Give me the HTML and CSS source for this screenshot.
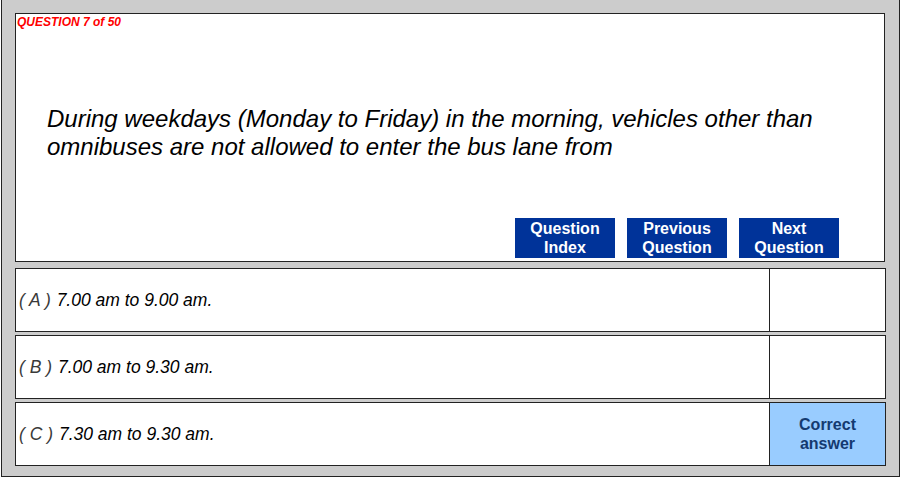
FILE: index.html
```html
<!DOCTYPE html>
<html lang="en">
<head>
<meta charset="utf-8">
<title>Question 7 of 50</title>
<link rel="stylesheet" href="styles.css">
</head>
<body>
<div class="frame">
  <section class="question">
    <div class="q-label">QUESTION 7 of 50</div>
    <p class="q-text">During weekdays (Monday to Friday) in the morning, vehicles other than omnibuses are not allowed to enter the bus lane from</p>
    <div class="nav">
      <a class="nav-btn">Question<br>Index</a>
      <a class="nav-btn">Previous<br>Question</a>
      <a class="nav-btn">Next<br>Question</a>
    </div>
  </section>
  <div class="options">
    <div class="option">
      <div class="opt-text"><span class="opt-key">( A )</span> 7.00 am to 9.00 am.</div>
      <div class="opt-mark"></div>
    </div>
    <div class="option">
      <div class="opt-text"><span class="opt-key">( B )</span> 7.00 am to 9.30 am.</div>
      <div class="opt-mark"></div>
    </div>
    <div class="option">
      <div class="opt-text"><span class="opt-key">( C )</span> 7.30 am to 9.30 am.</div>
      <div class="opt-mark correct">Correct<br>answer</div>
    </div>
  </div>
</div>
</body>
</html>
```

FILE: styles.css
```css
* { box-sizing: border-box; }

html, body {
  margin: 0;
  padding: 0;
  background: #ffffff;
  font-family: "Liberation Sans", Arial, sans-serif;
}

.frame {
  margin-left: 1px;
  width: 899px;
  height: 477px;
  background: #cccccc;
  border-left: 1px solid #222222;
  border-right: 1px solid #222222;
  border-bottom: 1px solid #222222;
  padding: 13px 0 0 13px;
}

.question {
  width: 870px;
  height: 249px;
  background: #ffffff;
  border: 1px solid #222222;
  display: flex;
  flex-direction: column;
}

.q-label {
  color: #ff0000;
  font-size: 12px;
  font-weight: bold;
  font-style: italic;
  line-height: 14px;
  padding: 1px 0 0 1px;
}

.q-text {
  margin: 76px 0 0 0;
  padding-left: 31px;
  font-size: 24px;
  font-style: italic;
  line-height: 28px;
  color: #000000;
}

.nav {
  margin-top: auto;
  margin-bottom: 3px;
  padding-right: 45px;
  display: flex;
  justify-content: flex-end;
  gap: 12px;
}

.nav-btn {
  width: 100px;
  height: 40px;
  background: #003399;
  color: #ffffff;
  font-size: 16px;
  font-weight: bold;
  line-height: 19px;
  text-align: center;
  display: flex;
  align-items: center;
  justify-content: center;
}

.options {
  margin-top: 6px;
  display: flex;
  flex-direction: column;
  gap: 3px;
  width: 871px;
}

.option {
  height: 64px;
  background: #ffffff;
  border: 1px solid #222222;
  display: flex;
}

.opt-text {
  flex: 1;
  display: flex;
  align-items: center;
  padding-left: 3px;
  font-size: 17.5px;
  font-style: italic;
  color: #000000;
  white-space: pre;
}

.opt-key {
  color: #3a3a3a;
  margin-right: 1px;
}

.opt-mark {
  width: 116px;
  border-left: 1px solid #222222;
  display: flex;
  align-items: center;
  justify-content: center;
  text-align: center;
  font-size: 16px;
  font-weight: bold;
  line-height: 19px;
  color: #143a70;
}

.opt-mark.correct {
  background: #99ccff;
}
```
